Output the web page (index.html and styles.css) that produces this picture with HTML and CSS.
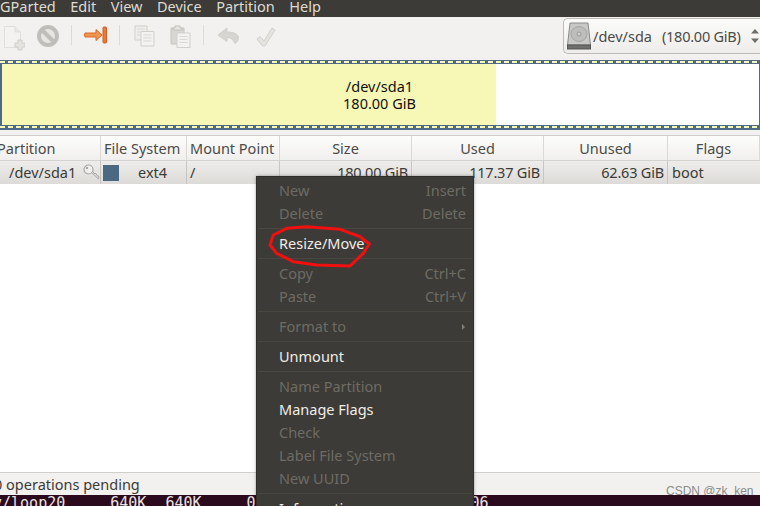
FILE: index.html
```html
<!DOCTYPE html>
<html lang="en">
<head>
<meta charset="utf-8">
<title>GParted</title>
<link rel="stylesheet" href="styles.css">
</head>
<body>
<div class="window">
  <nav class="menubar">
    <span class="menubar-item">GParted</span>
    <span class="menubar-item">Edit</span>
    <span class="menubar-item">View</span>
    <span class="menubar-item">Device</span>
    <span class="menubar-item">Partition</span>
    <span class="menubar-item">Help</span>
  </nav>
  <div class="toolbar">
    <div class="tools">
      <svg class="tool t-new" width="22" height="26" viewBox="0 0 22 26"><path d="M1.500 1.500H12L17.500 7V22.500H1.500Z" fill="#f3f2f0" stroke="#e0dfdb"/><path d="M12 1.500V7H17.500" fill="#e8e7e4" stroke="#e0dfdb"/><path d="M15 15h4v3h3v4h-3v3h-4v-3h-3v-4h3z" fill="#e4e3e0" stroke="#cfcecA"/></svg>
      <svg class="tool t-stop" width="24" height="24" viewBox="0 0 24 24"><circle cx="12" cy="12" r="9" fill="#e6e5e2" stroke="#bfbebb" stroke-width="4"/><path d="M5.500 5.500 18.500 18.500" stroke="#bfbebb" stroke-width="4"/></svg>
      <span class="tool-sep s1"></span>
      <svg class="tool t-apply" width="24" height="18" viewBox="0 0 24 18"><path d="M1 7H12V3.500L18 9 12 14.500V11H1Q0 9 1 7Z" fill="#f0954e" stroke="#d9692a"/><rect x="19" y="1" width="3.500" height="16" rx="1" fill="#ea7a36" stroke="#d25a20"/></svg>
      <span class="tool-sep s2"></span>
      <svg class="tool t-copy" width="21" height="22" viewBox="0 0 21 22"><path d="M1 1H13V15H1Z" fill="#efeeec" stroke="#d0cfcb"/><path d="M7 6.500H20V21H7Z" fill="#f3f2f0" stroke="#d0cfcb"/><path d="M9.500 10H17.500M9.500 13H17.500M9.500 16H17.500M3 4H11M3 7H6M3 10H6" stroke="#d8d7d3"/></svg>
      <svg class="tool t-paste" width="21" height="23" viewBox="0 0 21 23"><path d="M1 3H14V19H1Z" fill="#d8d7d4" stroke="#c6c5c1"/><path d="M5 3V1H10V3H12V5H3V3Z" fill="#e8e7e4" stroke="#c0bfbb"/><path d="M7 8H20V22.500H7Z" fill="#f3f2f0" stroke="#d0cfcb"/><path d="M9.500 11.500H17.500M9.500 14.500H17.500M9.500 17.500H17.500" stroke="#d8d7d3"/></svg>
      <span class="tool-sep s3"></span>
      <svg class="tool t-undo" width="23" height="18" viewBox="0 0 23 18"><path d="M10 1 1 8 10 14.500V10.500Q15 10 18 16.500Q22.500 14 21 9Q19 5 10 5Z" fill="#d6d5d2" stroke="#d0cfcb" stroke-linejoin="round"/></svg>
      <svg class="tool t-check" width="20" height="21" viewBox="0 0 20 21"><path d="M1 12 4 9.500 8 14 16 1 19 3 9 19H6.500Z" fill="#e4e3e0" stroke="#d2d1cd" stroke-linejoin="round"/></svg>
    </div>
    <div class="device">
      <svg class="disk" width="24" height="28" viewBox="0 0 24 28"><path d="M3 1H21L23.500 23H.5Z" fill="#c8c8c6" stroke="#8a8a88"/><ellipse cx="12" cy="12" rx="8" ry="7.500" fill="#bdbdbb" stroke="#a5a5a3"/><circle cx="12" cy="12" r="2" fill="#d2d2d0" stroke="#999"/><rect x=".5" y="23" width="23" height="4" fill="#6f6f6d" stroke="#555"/></svg>
      <span class="device-name">/dev/sda</span>
      <span class="device-size">(180.00 GiB)</span>
      <svg class="spin" width="8" height="14" viewBox="0 0 8 14"><path d="M4 0 8 4.500H0ZM4 14 0 9.500H8Z" fill="#6d6c68"/></svg>
    </div>
  </div>
  <section class="map">
    <span>/dev/sda1</span>
    <span>180.00 GiB</span>
  </section>
  <div class="table">
    <div class="thead">
      <span class="th th-left">Partition</span>
      <span class="th">File System</span>
      <span class="th">Mount Point</span>
      <span class="th center">Size</span>
      <span class="th center">Used</span>
      <span class="th center">Unused</span>
      <span class="th center">Flags</span>
    </div>
    <div class="tr">
      <span class="td td-part">/dev/sda1
        <svg class="key" width="17" height="17" viewBox="0 0 17 17"><circle cx="5.500" cy="5.500" r="4.500" fill="#f0efed" stroke="#a9a8a5" stroke-width="1.200"/><circle cx="4" cy="4" r="1.200" fill="#a9a8a5"/><path d="M8.500 8.500 15.500 15 16 12.500 14 11.500 13 9.500 11 9.500 10 7.500" fill="#e0dfdc" stroke="#a9a8a5"/></svg>
      </span>
      <span class="td td-fs"><i class="swatch"></i>ext4</span>
      <span class="td">/</span>
      <span class="td right">180.00 GiB</span>
      <span class="td right">117.37 GiB</span>
      <span class="td right">62.63 GiB</span>
      <span class="td td-flags">boot</span>
    </div>
    <div class="tbody-empty"></div>
  </div>
  <footer class="status">
    <span class="status-text">0 operations pending</span>
    <span class="mark">CSDN @zk_ken</span>
  </footer>
  <div class="terminal"><span class="t1">v/loop20</span><span class="t2">640K</span><span class="t3">640K</span><span class="t4">0</span><span class="t5">06</span></div>
</div>

<div class="ctx">
  <div class="mi off"><span>New</span><span>Insert</span></div>
  <div class="mi off"><span>Delete</span><span>Delete</span></div>
  <hr class="msep">
  <div class="mi"><span>Resize/Move</span></div>
  <hr class="msep">
  <div class="mi off"><span>Copy</span><span>Ctrl+C</span></div>
  <div class="mi off"><span>Paste</span><span>Ctrl+V</span></div>
  <hr class="msep">
  <div class="mi off"><span>Format to</span><i class="arrow"></i></div>
  <hr class="msep">
  <div class="mi"><span>Unmount</span></div>
  <hr class="msep">
  <div class="mi off"><span>Name Partition</span></div>
  <div class="mi"><span>Manage Flags</span></div>
  <div class="mi off"><span>Check</span></div>
  <div class="mi off"><span>Label File System</span></div>
  <div class="mi off"><span>New UUID</span></div>
  <hr class="msep">
  <div class="mi"><span>Information</span></div>
</div>

<svg class="circle" width="110" height="46" viewBox="0 0 110 46"><path d="M4 20 7.300 10 20.700 3.300 40.700 1.700 74 4.300 94 11.700 103.300 19 97.300 28.300 84 41 50.700 40 27.300 36.700 10.700 28.300Z" fill="none" stroke="#f01010" stroke-width="3" stroke-linejoin="round"/></svg>
</body>
</html>
```
FILE: styles.css
```css
* { box-sizing: border-box; }
html, body { margin: 0; height: 100%; overflow: hidden; }
body { position: relative; width: 760px; height: 506px; font-family: "Noto Sans", sans-serif; font-size: 14.500px; color: #3c3b37; background: #f2f1ef; }

.window { display: flex; flex-direction: column; height: 506px; overflow: hidden; }

.menubar { display: flex; flex: none; height: 17px; background: #3c3b37; color: #dfdbd2; gap: 14.500px; line-height: 13px; overflow: hidden; }
.menubar-item { display: block; white-space: nowrap; }

.toolbar { flex: none; height: 43px; display: flex; justify-content: space-between; background: #f2f1ef; }
.tools { display: flex; align-items: flex-start; }
.tool { display: block; flex: none; }
.tool-sep { display: block; flex: none; width: 1px; height: 20px; margin-top: 8px; background: #dcdbd8; }
.t-new { margin: 8px 0 0 3px; }
.t-stop { margin: 7px 0 0 11px; }
.s1 { margin-left: 11px; }
.t-apply { margin: 9px 0 0 12px; }
.s2 { margin-left: 11px; }
.t-copy { margin: 8px 0 0 14px; }
.t-paste { margin: 8px 0 0 15px; }
.s3 { margin-left: 12px; }
.t-undo { margin: 10px 0 0 13px; }
.t-check { margin: 10px 0 0 16px; }

.device { width: 197px; height: 36px; margin-top: 1px; border: 1px solid #bdbbb6; border-right: 0; border-radius: 5px 0 0 5px; background: linear-gradient(#fbfbfa, #eeedeb); display: flex; align-items: center; padding-left: 3px; color: #4c4b47; white-space: nowrap; }
.disk { flex: none; }
.device-name { margin-left: 2px; }
.device-size { margin-left: 10px; letter-spacing: -.25px; }
.spin { margin-left: 10px; flex: none; }

.map { flex: none; position: relative; height: 70px; margin-bottom: 5px; border-style: solid; border-color: #4d6a8a; border-width: 4px 1px 5px 2px; background: linear-gradient(90deg, #f8f8b6 494px, #fff 494px); display: flex; flex-direction: column; align-items: center; justify-content: center; color: #111; line-height: 17px; padding-right: 2px; }
.map::before, .map::after { content: ""; position: absolute; left: -2px; right: -1px; height: 2px; background: repeating-linear-gradient(90deg, #f8f8b6 0 5px, transparent 5px 8px); }
.map::before { top: -3px; }
.map::after { bottom: -3px; }

.table { flex: 1; display: flex; flex-direction: column; background: #fff; border-top: 1px solid #cfcdc9; min-height: 0; }
.thead, .tr { display: grid; grid-template-columns: 101px 86px 93px 132px 132px 124px 92px; flex: none; }
.thead { height: 25px; background: linear-gradient(#fdfdfc, #f0efed); border-bottom: 1px solid #d4d2ce; color: #4c4b47; }
.th { border-right: 1px solid #dbd9d5; line-height: 24px; padding-left: 3px; white-space: nowrap; overflow: hidden; }
.th-left { padding-left: 0; text-indent: -3px; }
.th.center { text-align: center; padding-left: 0; }
.tr { height: 23px; background: linear-gradient(#eeedeb, #dcdbd8); color: #3c3b37; }
.td { border-right: 1px solid #c8c6c2; line-height: 23px; padding-left: 3px; white-space: nowrap; display: flex; align-items: center; }
.td-part { padding-left: 9px; gap: 7px; overflow: hidden; }
.td-fs { padding-left: 2px; }
.td-flags { padding-left: 4px; border-right: 0; }
.right { justify-content: flex-end; padding-right: 3px; letter-spacing: -.2px; }
.swatch { display: block; width: 16px; height: 16px; background: #4b6983; margin-right: 19px; }
.key { flex: none; }
.tbody-empty { flex: 1; }

.status { flex: none; position: relative; overflow: hidden; height: 23px; border-top: 1px solid #d0cfcb; line-height: 22px; white-space: nowrap; background: #f2f1ef; color: #3c3b37; }
.status-text { display: block; margin-left: -6px; }
.mark { position: absolute; left: 666px; top: 11px; font-family: "Liberation Sans", sans-serif; font-size: 12px; line-height: 14px; color: #8c8b88; }

.terminal { flex: none; height: 11px; background: #2c0a1e; color: #e8e4e0; font-family: "DejaVu Sans Mono", monospace; font-size: 15px; line-height: 17px; display: flex; white-space: pre; overflow: hidden; }
.t1 { margin-left: -7px; }
.t2 { margin-left: 45px; }
.t3 { margin-left: 19px; }
.t4 { margin-left: 45px; }
.t5 { margin-left: 215px; }

.ctx { position: absolute; left: 256px; top: 176px; width: 218px; height: 340px; padding: 2px 1px; background: #3c3b37; border: 1px solid #2f2e2b; color: #f0ede6; box-shadow: 0 0 3px rgba(0,0,0,.35); }
.mi { height: 23px; display: flex; justify-content: space-between; align-items: center; padding: 0 6px 0 21px; line-height: 23px; white-space: nowrap; }
.mi.off { color: #6d6b63; }
.msep { height: 1px; margin: 3px 0; border: 0; background: #47463f; }
.arrow { display: block; width: 0; height: 0; border-left: 3px solid #837f75; border-top: 3px solid transparent; border-bottom: 3px solid transparent; margin-right: 1px; }

.circle { position: absolute; left: 266px; top: 225px; }
```
